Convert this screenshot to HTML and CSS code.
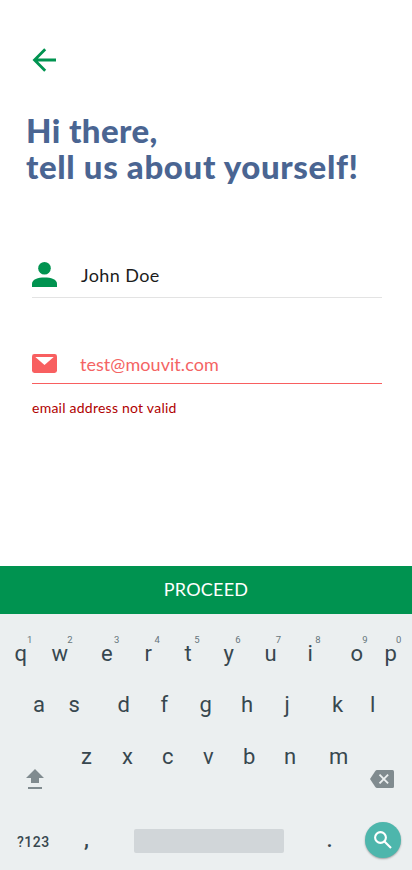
FILE: index.html
```html
<!DOCTYPE html>
<html lang="en">
<head>
<meta charset="utf-8">
<meta name="viewport" content="width=device-width">
<title>Sign up</title>
<link rel="stylesheet" href="styles.css">
</head>
<body>
<main class="form">
  <svg class="back" viewBox="0 0 24 24" width="24" height="24"><path d="M24 12H2.500M13.200 1.200 2.500 12l10.700 10.800" fill="none" stroke="#009350" stroke-width="2.800"/></svg>
  <h1><span class="line-one">Hi there,</span><span class="line-two">tell us about yourself!</span></h1>
  <div class="field name">
    <svg viewBox="0 0 25 25" width="25" height="25"><circle cx="12.5" cy="6.3" r="6.3"/><path d="M0 25v-3.2C0 17.5 6 15.6 12.5 15.6S25 17.5 25 21.8V25z"/></svg>
    <span>John Doe</span>
  </div>
  <div class="field email">
    <svg viewBox="0 0 25 19" width="25" height="19"><rect width="25" height="19" rx="2.4"/><path d="M3.3 3h18.4l-9.2 8z" fill="#fff"/></svg>
    <span>test@mouvit.com</span>
  </div>
  <p class="error">email address not valid</p>
</main>
<div class="proceed"><span>PROCEED</span></div>
<section class="keyboard">
  <div class="keys top"><span>q<sup>1</sup></span><span>w<sup class="tight">2</sup></span><span>e<sup class="mid">3</sup></span><span>r<sup class="wide">4</sup></span><span>t<sup class="wide">5</sup></span><span>y<sup class="mid">6</sup></span><span>u<sup class="tight">7</sup></span><span>i<sup class="wide">8</sup></span><span>o<sup class="tight">9</sup></span><span>p<sup class="tight">0</sup></span></div>
  <div class="keys home"><span>a</span><span>s</span><span>d</span><span>f</span><span>g</span><span>h</span><span>j</span><span>k</span><span>l</span></div>
  <div class="keys low">
    <svg class="shift" viewBox="0 0 18 20" width="18" height="20"><path d="M9 0l9 9h-5v5H5V9H0zM2 18h14v2H2z"/></svg>
    <span>z</span><span>x</span><span>c</span><span>v</span><span>b</span><span>n</span><span>m</span>
    <svg class="delete" viewBox="0 0 24 18" width="24" height="18"><path d="M7 0h15.500Q24 0 24 1.500v15Q24 18 22.500 18H7Q6 18 5.300 17L0 9l5.300-8Q6 0 7 0z"/><path d="M9.500 4.700l8.600 8.600M18.100 4.700l-8.600 8.600" fill="none" stroke="#ebeff0" stroke-width="1.900"/></svg>
  </div>
  <div class="keys bottom">
    <span class="symbols">?123</span><span class="comma">,</span><span class="space"></span><span class="dot">.</span>
    <span class="search"><svg viewBox="0 0 18 18" width="18" height="18"><circle cx="6.500" cy="6.500" r="5.400"/><path d="M10.500 10.500l6.500 6.500"/></svg></span>
  </div>
</section>
</body>
</html>
```
FILE: styles.css
```css
* { box-sizing: border-box; }
body { margin: 0; width: 412px; height: 870px; background: #fff; display: flex; flex-direction: column; font-family: Lato, sans-serif; overflow: hidden; }
svg, .keys span { flex: none; }
.form { height: 566px; padding: 48px 30px 0 32px; }
.back { display: block; }
h1 { margin: 40px 0 0 -6px; font-size: 33px; line-height: 36px; font-weight: 900; color: #4a6592; white-space: nowrap; }
h1 span { display: block; }
.line-one { letter-spacing: 0.400px; }
.line-two { letter-spacing: 0.640px; }
.field { display: flex; align-items: center; gap: 24px; border-bottom: 1px solid #e3e3e3; }
.field span { font-size: 18px; line-height: 24px; white-space: nowrap; }
.name { margin-top: 78px; height: 36px; padding-bottom: 10px; color: #1c1c1c; fill: #009350; letter-spacing: 0.400px; }
.email { margin-top: 54px; height: 32px; padding-bottom: 8px; color: #f46464; fill: #f85f60; gap: 23px; border-color: #f85f60; letter-spacing: 0.050px; }
.error { margin: 15px 0 0; font-size: 14px; line-height: 18px; color: #b00000; letter-spacing: 0.240px; }
.proceed { height: 48px; background: #009350; color: #fff; display: flex; align-items: center; justify-content: center; font-size: 18px; letter-spacing: 0.200px; padding-bottom: 2px; }
.keyboard { height: 256px; background: #ebeff0; color: #37474f; font: 22px/26px Roboto, sans-serif; padding-top: 26px; }
.keys { display: grid; justify-items: start; white-space: nowrap; }
.top { grid-template-columns: 37px 49.5px 43.5px 40px 39px 41px 43px 43px 34px 20px; padding-left: 14.500px; height: 52px; }
.home { grid-template-columns: 35.500px 49px 43px 39px 41.500px 43.500px 47.500px 38px 20px; padding-left: 33px; height: 52px; }
.low { grid-template-columns: 55px 41px 40px 41px 40px 41px 45px 40.500px 24px; padding-left: 26px; height: 73px; fill: #808b8f; }
.shift { margin-top: 25px; }
.delete { margin-top: 26px; }
sup { font-size: 9.500px; line-height: 0; color: #66757c; vertical-align: 18px; }
.tight { margin-left: -0.800px; }
.mid { margin-left: 1.300px; }
.wide { margin-left: 2.500px; }
.bottom { grid-template-columns: 67px 49.500px 193px 38px 36px; padding-left: 17px; align-items: start; }
.symbols { font-size: 14px; letter-spacing: 0.500px; font-weight: 500; padding-top: 12px; }
.comma, .dot { font-weight: 500; padding-top: 10px; }
.space { width: 150px; height: 24px; background: #d1d6d9; border-radius: 2px; margin-top: 12px; }
.search { width: 36px; height: 36px; border-radius: 50%; background: #4db6ac; margin-top: 5px; box-shadow: 0 1px 2px #0005; display: grid; place-items: center; }
.search svg { fill: none; stroke: #fff; stroke-width: 2.100; }
```
